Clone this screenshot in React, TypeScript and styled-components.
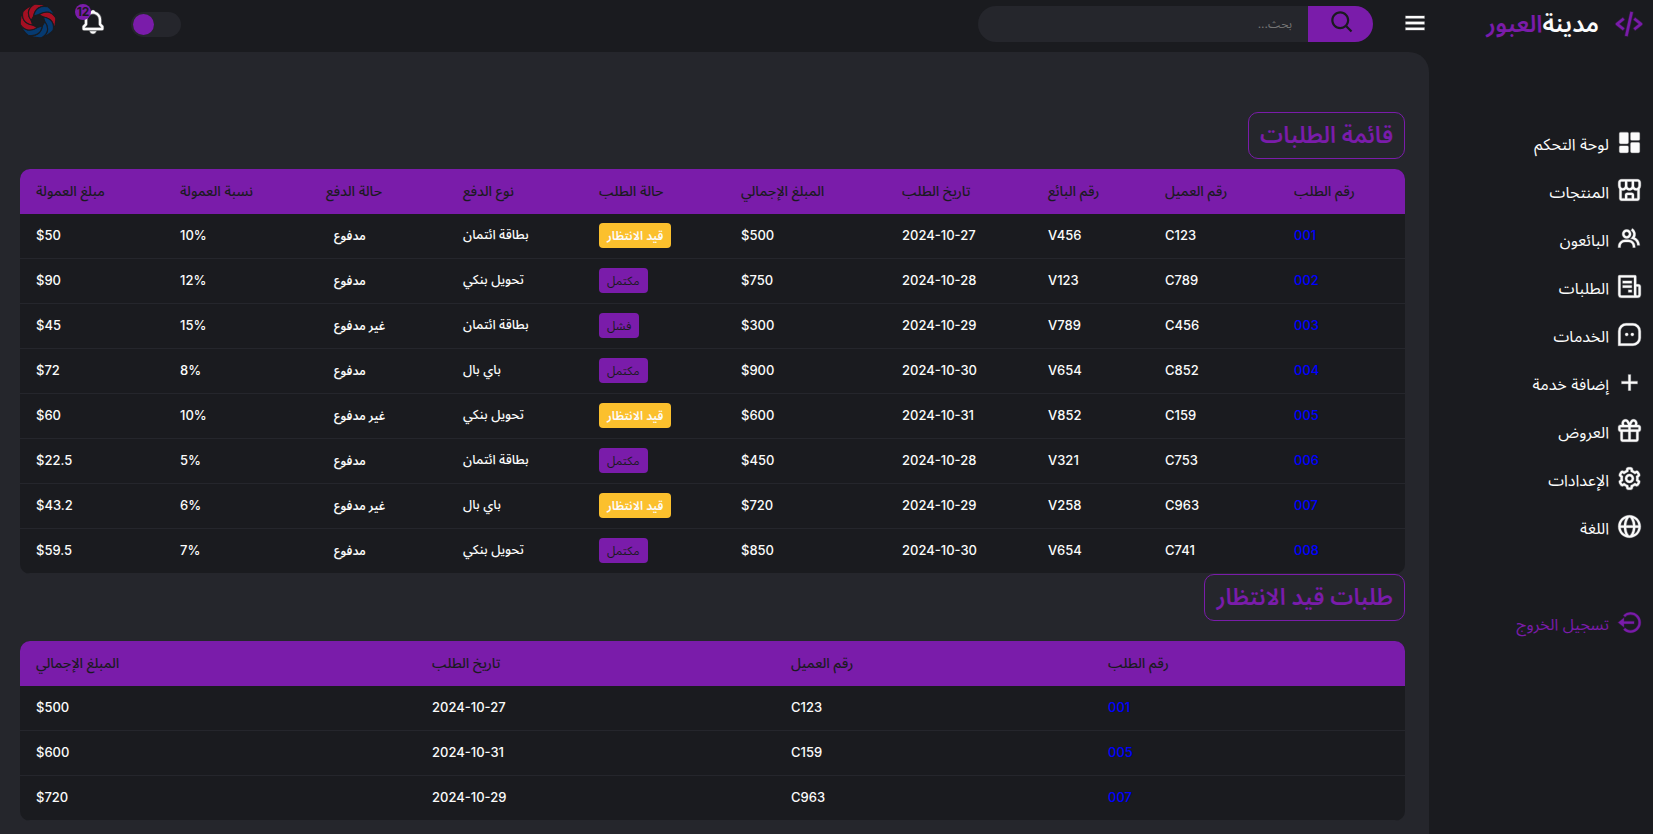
import React from "react";
import styled, { createGlobalStyle } from "styled-components";
import {
  BiSolidDashboard, BiStoreAlt, BiGroup, BiPlus, BiGift, BiGlobe,
  BiLogOutCircle, BiCodeAlt, BiMenu, BiBell, BiCog, BiSearch,
} from "react-icons/bi";

const c = {
  light: "#1a1b1f",
  grey: "#25262c",
  primary: "#7a1caa",
  warning: "#fbc02d",
  text: "#fbfbfb",
};

const Global = createGlobalStyle`
  * { box-sizing: border-box; }
  body {
    margin: 0;
    background: ${c.grey};
    color: ${c.text};
    font-family: Inter, "Noto Sans Arabic", "DejaVu Sans Condensed", "DejaVu Sans", sans-serif;
    font-weight: 500;
  }
`;

const Page = styled.div`
  display: flex;
  min-height: 100vh;
  background: ${c.light};
`;
const Sidebar = styled.aside`
  flex: 0 0 224px;
  background: ${c.light};
`;
const Brand = styled.a`
  display: flex;
  align-items: center;
  height: 48px;
  padding-right: 8px;
  gap: 14px;
  color: ${c.primary};
  font-size: 24px;
  font-weight: 600;
  text-decoration: none;
  white-space: nowrap;
  svg { stroke: currentColor; stroke-width: 1px; stroke-opacity: 0.3; }
`;
const BrandStrong = styled.span`
  color: ${c.text};
`;
const Menu = styled.ul<{ $top: number }>`
  list-style: none;
  margin: 0;
  padding: ${(p) => p.$top}px 0 0;
`;
const MenuItem = styled.li`
  height: 48px;
`;
const MenuLink = styled.a<{ $accent?: boolean }>`
  display: flex;
  align-items: center;
  gap: 7px;
  height: 48px;
  padding: 1px 10px 0 0;
  color: ${(p) => (p.$accent ? c.primary : c.text)};
  font-size: 16px;
  font-weight: 400;
  text-decoration: none;
  white-space: nowrap;
`;
const MenuIcon = styled.span`
  display: flex;
  padding-bottom: 4px;
  svg { stroke: currentColor; stroke-width: 1px; stroke-opacity: 0.3; }
`;
const Column = styled.div`
  flex: 1;
  min-width: 0;
  display: flex;
  flex-direction: column;
`;
const Bar = styled.header`
  display: flex;
  align-items: center;
  height: 52px;
  padding: 0 0 4px 20px;
`;
const IconButton = styled.button`
  display: flex;
  padding: 0 0 2px;
  border: 0;
  background: none;
  color: ${c.text};
  svg { stroke: currentColor; stroke-width: 1px; stroke-opacity: 0.3; }
`;
const Search = styled.form`
  display: flex;
  width: 395px;
  height: 36px;
  margin-right: 28px;
  margin-left: auto;
`;
const SearchButton = styled.button`
  display: flex;
  align-items: flex-start;
  justify-content: center;
  width: 65px;
  padding: 3px 0 0 4px;
  border: 0;
  border-radius: 0 36px 36px 0;
  background: ${c.primary};
  color: ${c.light};
`;
const SearchInput = styled.input`
  flex: 1;
  min-width: 0;
  padding: 0 16px 2px;
  border: 0;
  border-radius: 36px 0 0 36px;
  background: ${c.grey};
  color: ${c.text};
  font: inherit;
  font-size: 12px;
  font-weight: 400;
  &::placeholder { color: #757575; opacity: 1; }
`;
const Toggle = styled.input`
  appearance: none;
  display: flex;
  align-items: center;
  width: 50px;
  height: 25px;
  margin: 0;
  padding: 2px;
  border-radius: 25px;
  background: ${c.grey};
  direction: ltr;
  &::before {
    content: "";
    width: 21px;
    height: 21px;
    border-radius: 50%;
    background: ${c.primary};
  }
`;
const Bell = styled.a`
  position: relative;
  display: flex;
  margin: 0 24px 4px 23px;
  color: ${c.text};
  svg { stroke: currentColor; stroke-width: 1px; stroke-opacity: 0.3; }
`;
const Count = styled.span`
  position: absolute;
  top: -4px;
  left: -4px;
  width: 16px;
  height: 16px;
  border-radius: 50%;
  background: ${c.primary};
  color: ${c.light};
  font-size: 12px;
  font-weight: 700;
  line-height: 16px;
  text-align: center;
`;
const Profile = styled.a`
  display: flex;
  margin-bottom: 6px;
`;
const Main = styled.main`
  flex: 1;
  padding: 60px 24px 14px 20px;
  border-radius: 0 20px 0 0;
  background: ${c.grey};
`;
const Title = styled.h1`
  width: fit-content;
  height: 47px;
  margin: 0;
  padding: 0 11px;
  border: 1px solid ${c.primary};
  border-radius: 10px;
  color: ${c.primary};
  font-size: 23px;
  font-weight: 600;
  line-height: 45px;
  white-space: nowrap;
`;
const Table = styled.table<{ $top: number }>`
  width: 100%;
  margin: ${(p) => p.$top}px 0 0;
  border-spacing: 0;
  border-radius: 10px;
  overflow: hidden;
  background: ${c.light};
  table-layout: fixed;
  font-size: 13px;
`;
const Th = styled.th`
  height: 45px;
  padding: 0 16px;
  background: ${c.primary};
  color: ${c.light};
  font-size: 14px;
  font-weight: 500;
  text-align: left;
  white-space: nowrap;
`;
const Td = styled.td`
  height: 45px;
  padding: 0 16px 2px;
  border-bottom: 1px solid ${c.grey};
  text-align: left;
  white-space: nowrap;
`;
const OrderLink = styled.a`
  color: #0000ff;
  text-decoration: none;
`;
const tones = {
  pending: { bg: c.warning, fg: c.text, weight: 600 },
  done: { bg: c.primary, fg: c.light, weight: 400 },
  plain: { bg: "transparent", fg: c.text, weight: 600 },
};
const Badge = styled.span<{ $tone: keyof typeof tones }>`
  display: inline-block;
  height: 25px;
  padding: 0 8px;
  border-radius: 4px;
  background: ${(p) => tones[p.$tone].bg};
  color: ${(p) => tones[p.$tone].fg};
  font-size: 12px;
  font-weight: ${(p) => tones[p.$tone].weight};
  line-height: 25px;
`;

const ServicesIcon = ({ size }: { size: number }) => (
  <svg width={size} height={size} viewBox="0 0 24 24" fill="currentColor">
    <path fillRule="evenodd" d="M2 22V9a7 7 0 0 1 7-7h6a7 7 0 0 1 7 7v6a7 7 0 0 1-7 7zM4 20h11a5 5 0 0 0 5-5V9a5 5 0 0 0-5-5H9a5 5 0 0 0-5 5z" />
    <circle cx="9.5" cy="12" r="1.3" />
    <circle cx="14.5" cy="12" r="1.3" />
  </svg>
);
const NewsIcon = ({ size }: { size: number }) => (
  <svg width={size} height={size} viewBox="0 0 24 24" fill="currentColor">
    <path d="M19.9 10H18V3a1 1 0 0 0-1-1H3a1 1 0 0 0-1 1v16c0 1.7 1.3 3 3 3h14c1.7 0 3-1.3 3-3v-7c0-1.1-.9-2-2.1-2zM5 20c-.6 0-1-.4-1-1V4h12v15c0 .4.1.7.2 1H5zm15-1c0 .6-.4 1-1 1s-1-.4-1-1v-7h2v7z" />
    <path d="M6 7h8v2H6zm0 4h8v2H6zm5 4h3v2h-3z" />
  </svg>
);
const blades = [
  "#a50f22", "#063a70", "#063a70", "#063a70",
  "#a50f22", "#a50f22", "#a50f22", "#063a70",
];
const Swirl = () => (
  <svg width="36" height="34" viewBox="-50 -50 100 100" preserveAspectRatio="none">
    {blades.map((fill, i) => (
      <path
        key={i}
        d="M2 -19C20 -32 38 -28 49 -10Q51 8 42 27C47 7 37 -8 15 -12Z"
        fill={fill}
        stroke={c.light}
        strokeWidth="3"
        transform={`rotate(${i * 45})`}
      />
    ))}
  </svg>
);

const menu: [React.ComponentType<{ size: number }>, string][] = [
  [BiSolidDashboard, "لوحة التحكم"],
  [BiStoreAlt, "المنتجات"],
  [BiGroup, "البائعون"],
  [NewsIcon, "الطلبات"],
  [ServicesIcon, "الخدمات"],
  [BiPlus, "إضافة خدمة"],
  [BiGift, "العروض"],
  [BiCog, "الإعدادات"],
  [BiGlobe, "اللغة"],
];

const pay = { card: "بطاقة ائتمان", bank: "تحويل بنكي", paypal: "باي بال" };
const states = {
  pending: { tone: "pending", label: "قيد الانتظار" },
  done: { tone: "done", label: "مكتمل" },
  failed: { tone: "done", label: "فشل" },
} as const;
type Order = [string, string, string, string, string, keyof typeof states, keyof typeof pay, boolean, string, string];
const orders: Order[] = [
  ["001", "C123", "V456", "2024-10-27", "$500", "pending", "card", true, "10%", "$50"],
  ["002", "C789", "V123", "2024-10-28", "$750", "done", "bank", true, "12%", "$90"],
  ["003", "C456", "V789", "2024-10-29", "$300", "failed", "card", false, "15%", "$45"],
  ["004", "C852", "V654", "2024-10-30", "$900", "done", "paypal", true, "8%", "$72"],
  ["005", "C159", "V852", "2024-10-31", "$600", "pending", "bank", false, "10%", "$60"],
  ["006", "C753", "V321", "2024-10-28", "$450", "done", "card", true, "5%", "$22.5"],
  ["007", "C963", "V258", "2024-10-29", "$720", "pending", "paypal", false, "6%", "$43.2"],
  ["008", "C741", "V654", "2024-10-30", "$850", "done", "bank", true, "7%", "$59.5"],
];
const orderCols: [string, number][] = [
  ["رقم الطلب", 127], ["رقم العميل", 129], ["رقم البائع", 117], ["تاريخ الطلب", 146],
  ["المبلغ الإجمالي", 161], ["حالة الطلب", 142], ["نوع الدفع", 136], ["حالة الدفع", 137],
  ["نسبة العمولة", 146], ["مبلغ العمولة", 144],
];
const pendingCols: [string, number][] = [
  ["رقم الطلب", 313], ["رقم العميل", 317], ["تاريخ الطلب", 359], ["المبلغ الإجمالي", 396],
];

const Col = styled.col<{ $w: number }>`
  width: ${(p) => p.$w}px;
`;
const Head = ({ cols }: { cols: [string, number][] }) => (
  <>
    <colgroup>{cols.map(([t, w]) => <Col key={t} $w={w} />)}</colgroup>
    <thead><tr>{cols.map(([t]) => <Th key={t} scope="col">{t}</Th>)}</tr></thead>
  </>
);
const Ltr = ({ children }: { children: string }) => <bdi dir="ltr">{children}</bdi>;

export default function App() {
  return (
    <Page dir="rtl" lang="ar">
      <Global />
      <Sidebar>
        <Brand href="#">
          <BiCodeAlt size={32} />
          <span><BrandStrong>مدينة</BrandStrong>العبور</span>
        </Brand>
        <nav>
          <Menu $top={72}>
            {menu.map(([Icon, label]) => (
              <MenuItem key={label}><MenuLink href="#"><MenuIcon><Icon size={27} /></MenuIcon>{label}</MenuLink></MenuItem>
            ))}
          </Menu>
          <Menu $top={48}>
            <MenuItem><MenuLink href="#" $accent><MenuIcon><BiLogOutCircle size={27} /></MenuIcon>تسجيل الخروج</MenuLink></MenuItem>
          </Menu>
        </nav>
      </Sidebar>
      <Column>
        <Bar>
          <IconButton type="button" aria-label="القائمة"><BiMenu size={28} /></IconButton>
          <Search>
            <SearchButton type="button" aria-label="بحث"><BiSearch size={27} /></SearchButton>
            <SearchInput type="search" aria-label="بحث" placeholder="بحث..." />
          </Search>
          <Toggle type="checkbox" aria-label="الوضع الداكن" />
          <Bell href="#" aria-label="الإشعارات"><BiBell size={28} /><Count>12</Count></Bell>
          <Profile href="#" aria-label="الملف الشخصي"><Swirl /></Profile>
        </Bar>
        <Main>
          <Title>قائمة الطلبات</Title>
          <Table $top={10}>
            <Head cols={orderCols} />
            <tbody>
              {orders.map(([id, client, seller, date, total, state, method, paid, rate, fee]) => (
                <tr key={id}>
                  <Td><OrderLink href="#">{id}</OrderLink></Td>
                  <Td>{client}</Td>
                  <Td>{seller}</Td>
                  <Td><Ltr>{date}</Ltr></Td>
                  <Td><Ltr>{total}</Ltr></Td>
                  <Td><Badge $tone={states[state].tone}>{states[state].label}</Badge></Td>
                  <Td>{pay[method]}</Td>
                  <Td><Badge $tone="plain">{paid ? "مدفوع" : "غير مدفوع"}</Badge></Td>
                  <Td><Ltr>{rate}</Ltr></Td>
                  <Td><Ltr>{fee}</Ltr></Td>
                </tr>
              ))}
            </tbody>
          </Table>
          <Title as="h2">طلبات قيد الانتظار</Title>
          <Table $top={20}>
            <Head cols={pendingCols} />
            <tbody>
              {orders.filter((o) => o[5] === "pending").map(([id, client, , date, total]) => (
                <tr key={id}>
                  <Td><OrderLink href="#">{id}</OrderLink></Td>
                  <Td>{client}</Td>
                  <Td><Ltr>{date}</Ltr></Td>
                  <Td><Ltr>{total}</Ltr></Td>
                </tr>
              ))}
            </tbody>
          </Table>
        </Main>
      </Column>
    </Page>
  );
}
